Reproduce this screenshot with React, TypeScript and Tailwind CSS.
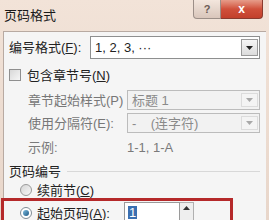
import React from 'react';

const font = { fontFamily: '"Liberation Sans", "Noto Sans CJK SC", sans-serif' };

function Arrow({ dim }: { dim?: boolean }) {
  return (
    <svg width="7" height="4" viewBox="0 0 7 4" aria-hidden>
      <path d="M0 0h7L3.5 4z" fill={dim ? '#a8a8a8' : '#222'} />
    </svg>
  );
}

function Select({ value, disabled }: { value: React.ReactNode; disabled?: boolean }) {
  return (
    <div
      className={`flex-1 h-full flex items-center border ${
        disabled ? 'border-[#bcbcbc] bg-[#f2f2f2] text-[#8a8a8a]' : 'border-[#8e8f8f] bg-white text-[#222]'
      }`}
    >
      <div className="flex-1 pl-[4px] whitespace-pre">{value}</div>
      <div
        className={`w-[17px] h-[calc(100%-4px)] mr-[1px] flex items-center justify-center border ${
          disabled ? 'border-[#dcdcdc] bg-[#f4f4f4]' : 'border-[#9a9a9a] bg-gradient-to-b from-[#f6f6f6] to-[#dcdcdc]'
        }`}
      >
        <Arrow dim={disabled} />
      </div>
    </div>
  );
}

export default function App() {
  return (
    <div
      className="w-[269px] h-[220px] overflow-hidden flex flex-col bg-gradient-to-b from-[#f2e3d8] to-[#e8d6ca] text-[13px] leading-none"
      style={font}
    >
      {/* title bar */}
      <div className="h-[31px] flex items-start shrink-0">
        <div className="pl-[4px] pt-[9px] text-[13px] text-[#1a1a1a]">页码格式</div>
        <div className="ml-auto mr-[6px] flex">
          <div className="w-[28px] h-[19px] flex items-center justify-center rounded-bl-[4px] border border-t-0 border-[#9c8f88] bg-gradient-to-b from-[#f3e6dd] to-[#d9c6bb] text-[11px] font-bold text-[#6b5b55]">
            ?
          </div>
          <div className="w-[42px] h-[19px] flex items-center justify-center rounded-br-[4px] border border-l-0 border-t-0 border-[#8a3a2e] bg-gradient-to-b from-[#e69c8a] via-[#d0503b] to-[#c2402c] text-[12px] font-bold text-white">
            x
          </div>
        </div>
      </div>

      {/* client area */}
      <div className="flex-1 min-h-0 mx-[3px] border-t border-l border-[#b8aaa2] bg-[#f5f5f5] flex flex-col text-[#222]">
        <div className="mt-[4px] h-[23px] shrink-0 flex items-center pr-[6px]">
          <div className="w-[86px] pl-[5px]">编号格式(<u>F</u>):</div>
          <Select value="1, 2, 3, ···" />
        </div>

        <div className="mt-[9px] h-[14px] shrink-0 flex items-center pl-[5px]">
          <div className="w-[12px] h-[12px] border border-[#8f8f8f] bg-gradient-to-br from-[#d8d8d8] to-[#f6f6f6]" />
          <div className="ml-[6px]">包含章节号(<u>N</u>)</div>
        </div>

        <div className="mt-[8px] h-[20px] shrink-0 flex items-center pr-[6px] text-[#777]">
          <div className="w-[123px] pl-[24px]">章节起始样式(P)</div>
          <Select value="标题 1" disabled />
        </div>

        <div className="mt-[3px] h-[20px] shrink-0 flex items-center pr-[6px] text-[#777]">
          <div className="w-[123px] pl-[24px]">使用分隔符(E):</div>
          <Select value={'-    (连字符)'} disabled />
        </div>

        <div className="mt-[8px] h-[12px] shrink-0 flex items-center text-[#7a7a7a]">
          <div className="w-[123px] pl-[24px]">示例:</div>
          <div>1-1, 1-A</div>
        </div>

        <div className="mt-[11px] h-[14px] shrink-0 flex items-center pr-[6px]">
          <div className="pl-[5px]">页码编号</div>
          <div className="flex-1 ml-[6px] border-t border-[#d8d8d8]" />
        </div>

        <div className="mt-[5px] h-[14px] shrink-0 flex items-center pl-[16px]">
          <div className="w-[12px] h-[12px] rounded-full border border-[#9a9a9a] bg-gradient-to-br from-[#d6d6d6] to-[#f7f7f7]" />
          <div className="ml-[5px]">续前节(<u>C</u>)</div>
        </div>

        <div className="mt-[1px] -ml-[3px] w-[232px] h-[30px] shrink-0 border-[3px] border-[#b5292a] flex items-start pt-[1px] pl-[16px]">
          <div className="mt-[5px] w-[12px] h-[12px] rounded-full border border-[#7f8c96] bg-white flex items-center justify-center">
            <div className="w-[6px] h-[6px] rounded-full bg-gradient-to-br from-[#7dbde0] to-[#1e5a85]" />
          </div>
          <div className="ml-[5px] mt-[5px]">起始页码(<u>A</u>):</div>
          <div className="ml-[14px] w-[56px] h-[20px] border border-[#9a9a9a] bg-white flex items-center pl-[3px]">
            <span className="bg-[#3a6fb0] text-white px-[1px]">1</span>
          </div>
          <div className="w-[14px] h-[20px] border border-l-0 border-[#b0b0b0] bg-[#eeeeee] flex items-start justify-center pt-[3px]">
            <svg width="7" height="4" viewBox="0 0 7 4" aria-hidden>
              <path d="M0 4h7L3.5 0z" fill="#333" />
            </svg>
          </div>
        </div>
      </div>
    </div>
  );
}
